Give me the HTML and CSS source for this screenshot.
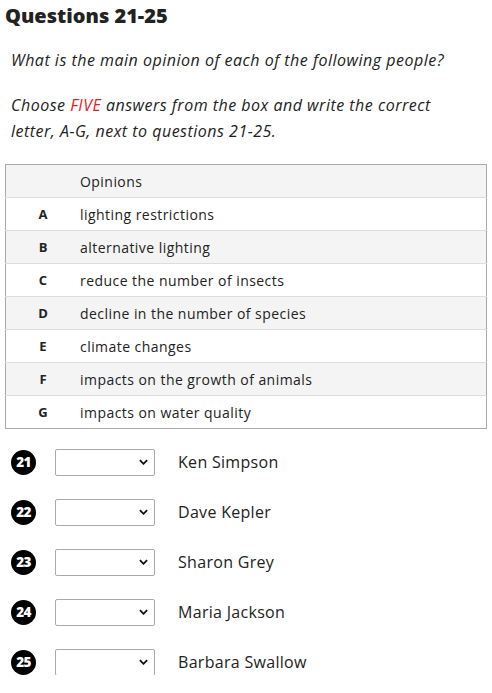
FILE: index.html
```html
<!DOCTYPE html>
<html>
<head>
<meta charset="utf-8">
<link rel="stylesheet" href="styles.css">
</head>
<body>
<div class="page">
  <h2 class="title">Questions 21-25</h2>
  <p class="instr">What is the main opinion of each of the following people?</p>
  <p class="instr choose">Choose <span class="red">FIVE</span> answers from the box and write the correct letter, A-G, next to questions 21-25.</p>
  <table class="opts">
    <tr class="hd"><td class="let"></td><td>Opinions</td></tr>
    <tr><td class="let">A</td><td>lighting restrictions</td></tr>
    <tr class="alt"><td class="let">B</td><td>alternative lighting</td></tr>
    <tr><td class="let">C</td><td>reduce the number of insects</td></tr>
    <tr class="alt"><td class="let">D</td><td>decline in the number of species</td></tr>
    <tr><td class="let">E</td><td>climate changes</td></tr>
    <tr class="alt"><td class="let">F</td><td>impacts on the growth of animals</td></tr>
    <tr><td class="let">G</td><td>impacts on water quality</td></tr>
  </table>
  <div class="qs">
    <div class="q"><span class="num">21</span><div class="sel"><svg viewBox="0 0 10 6" class="chev"><path d="M1 1 L5 5 L9 1" /></svg></div><span class="name">Ken Simpson</span></div>
    <div class="q"><span class="num">22</span><div class="sel"><svg viewBox="0 0 10 6" class="chev"><path d="M1 1 L5 5 L9 1" /></svg></div><span class="name">Dave Kepler</span></div>
    <div class="q"><span class="num">23</span><div class="sel"><svg viewBox="0 0 10 6" class="chev"><path d="M1 1 L5 5 L9 1" /></svg></div><span class="name">Sharon Grey</span></div>
    <div class="q"><span class="num">24</span><div class="sel"><svg viewBox="0 0 10 6" class="chev"><path d="M1 1 L5 5 L9 1" /></svg></div><span class="name">Maria Jackson</span></div>
    <div class="q"><span class="num">25</span><div class="sel"><svg viewBox="0 0 10 6" class="chev"><path d="M1 1 L5 5 L9 1" /></svg></div><span class="name">Barbara Swallow</span></div>
  </div>
</div>
</body>
</html>
```
FILE: styles.css
```css
html, body { margin: 0; padding: 0; background: #fff; }
.page { padding: 5px 5px 0 5px; font-family: "Open Sans", "Lato", sans-serif; color: #222; }
.title { margin: 0; font-family: "Open Sans", sans-serif; font-weight: 800; font-size: 20px; line-height: 22px; color: #222; }
.instr { margin: 20px 0 0 6px; font-size: 16px; line-height: 26px; font-style: italic; letter-spacing: 0.5px; color: #222; }
.choose { margin-top: 19px; max-width: 445px; }
.red { color: #e8201c; }
.opts { margin-top: 20px; width: 482px; border-collapse: collapse; border: 1px solid #aaa; font-size: 14px; letter-spacing: 0.45px; color: #222; }
.opts td { height: 32px; padding: 0; border-top: 1px solid #ddd; }
.opts tr:first-child td { border-top: none; }
.opts .hd td, .opts .alt td { background: #f4f4f4; }
.opts .let { width: 74px; padding-right: 0; text-align: center; font-family: "Open Sans", sans-serif; font-weight: 700; font-size: 13px; letter-spacing: 0; }
.qs { display: flex; flex-direction: column; gap: 24px; margin-top: 20px; }
.q { display: flex; align-items: center; height: 26px; }
.num { width: 25px; height: 25px; margin-left: 6px; border-radius: 50%; background: #000; color: #fff; font-family: "Open Sans", sans-serif; font-weight: 800; font-size: 13.5px; display: flex; align-items: center; justify-content: center; letter-spacing: -0.7px; }
.sel { width: 98px; height: 25px; margin-left: 19px; border: 1px solid #aaa; border-radius: 2px; display: flex; align-items: center; justify-content: flex-end; }
.chev { width: 9px; height: 6px; margin-right: 6px; fill: none; stroke: #111; stroke-width: 2; }
.name { margin-left: 23px; font-size: 16px; letter-spacing: 0.3px; color: #222; }
```
